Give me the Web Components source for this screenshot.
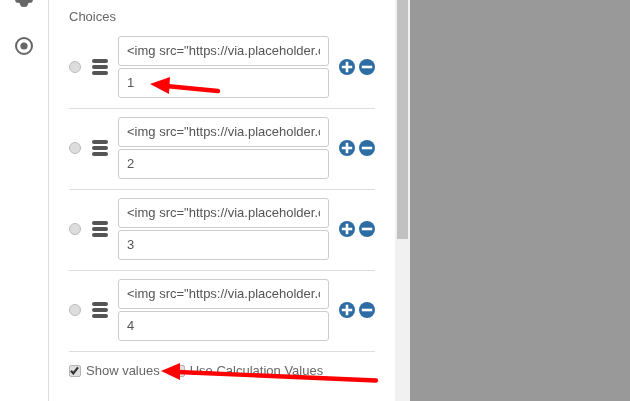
<!DOCTYPE html>
<html>
<head>
<meta charset="utf-8">
<style>
html,body{margin:0;height:401px;overflow:hidden;background:#fff}
body{font:13px "Liberation Sans",Arial,sans-serif;color:#666}
</style>
</head>
<body>
<editor-shell>
<choice-row><span slot="html">&lt;img src="https://via.placeholder.com/150"&gt;</span><span slot="val">1</span></choice-row>
<choice-row><span slot="html">&lt;img src="https://via.placeholder.com/150"&gt;</span><span slot="val">2</span></choice-row>
<choice-row><span slot="html">&lt;img src="https://via.placeholder.com/150"&gt;</span><span slot="val">3</span></choice-row>
<choice-row><span slot="html">&lt;img src="https://via.placeholder.com/150"&gt;</span><span slot="val">4</span></choice-row>
</editor-shell>
<script>
// left rail with the two tool icons
customElements.define("side-rail",class extends HTMLElement{
constructor(){
super();
this.attachShadow({mode:"open"}).innerHTML=`
<style>
:host{display:flex;flex-direction:column;align-items:center;flex:none;box-sizing:border-box;width:49px;border-right:1px solid #ddd;overflow:hidden;gap:30px}
svg{display:block;flex:none}
.gear{margin-top:-12px}
</style>
<svg class="gear" width="18" height="19" viewBox="0 0 18 19"><path fill="#666" d="M0 12L1 14.5L4.5 15L6 18.5L9 19L12 18.5L13.5 15L17 14.5L18 12L18 7L17 4.5L13.5 4L12 .5L9 0L6 .5L4.5 4L1 4.5L0 7Z"/></svg>
<svg width="18" height="18" viewBox="0 0 18 18"><circle cx="9" cy="9" r="8" fill="none" stroke="#666" stroke-width="2"/><circle cx="9" cy="9" r="3.6" fill="#666"/></svg>`;
}
});

// one choice: radio, drag handle, two fields, add and remove
customElements.define("choice-row",class extends HTMLElement{
constructor(){
super();
this.attachShadow({mode:"open"}).innerHTML=`
<style>
:host{display:flex;align-items:center;padding:8px 0 10px;border-bottom:1px solid #ddd}
.radio{box-sizing:border-box;width:12px;height:12px;border-radius:50%;background:#ddd;border:1px solid #bbb;flex:none;margin-top:-1px}
.handle{display:flex;flex-direction:column;gap:2px;width:16px;margin:-1px 10px 0 11px;flex:none}
.handle i{display:block;height:4px;border-radius:2px;background:#555}
.fields{display:flex;flex-direction:column;gap:2px;width:211px;flex:none}
.field{box-sizing:border-box;height:30px;line-height:28px;padding:0 8px;border:1px solid #ccc;border-radius:3px;color:#555;white-space:nowrap;overflow:hidden}
.field div{overflow:hidden;height:28px;margin-top:-.5px}
.btns{display:flex;gap:4px;margin-left:10px;flex:none}
svg{display:block}
</style>
<span class="radio"></span>
<span class="handle"><i></i><i></i><i></i></span>
<div class="fields">
<div class="field"><div><slot name="html"></slot></div></div>
<div class="field"><div><slot name="val"></slot></div></div>
</div>
<div class="btns">
<svg width="16" height="16" viewBox="0 0 16 16"><circle cx="8" cy="8" r="8" fill="#2e6da4"/><path d="M8 2.8v10.4M2.8 8h10.4" stroke="#fff" stroke-width="2.6"/></svg>
<svg width="16" height="16" viewBox="0 0 16 16"><circle cx="8" cy="8" r="8" fill="#2e6da4"/><path d="M2.8 8h10.4" stroke="#fff" stroke-width="2.6"/></svg>
</div>`;
}
});

customElements.define("check-label",class extends HTMLElement{
constructor(){
super();
this.attachShadow({mode:"open"}).innerHTML=`
<style>
:host{display:inline-flex;align-items:center;gap:5px;color:#666}
.box{box-sizing:border-box;width:12px;height:12px;border:1.5px solid #b5b5b5;border-radius:2px;background:#e0e0e0;flex:none;display:block;margin-top:2px}
.box svg{display:none;width:9px;height:9px}
:host([checked]) .box svg{display:block}
</style>
<span class="box"><svg viewBox="0 0 9 9"><path d="M1 4.8l2.3 2.6L8 1.4" fill="none" stroke="#333" stroke-width="2.2"/></svg></span>
<slot></slot>`;
}
});

// whole screen: rail, form panel, scrollbar, grey pane, and the red annotation arrows on top
customElements.define("editor-shell",class extends HTMLElement{
constructor(){
super();
this.attachShadow({mode:"open"}).innerHTML=`
<style>
:host{display:flex;position:relative;height:401px;overflow:hidden}
.panel{box-sizing:border-box;width:346px;flex:none;padding:9px 20px 0;will-change:transform}
.label{line-height:15px;height:19px;color:#666}
.opts{display:flex;align-items:center;gap:5px;margin-top:9px;height:18px}
.bar{width:15px;flex:none;background:#f1f1f1;box-sizing:border-box;padding:0 2px 0 2px}
.thumb{height:239px;background:#c1c1c1}
.grey{flex:1;background:#999}
.marks{position:absolute;left:0;top:0;pointer-events:none}
</style>
<side-rail></side-rail>
<div class="panel">
<div class="label">Choices</div>
<slot></slot>
<div class="opts"><check-label checked>Show values</check-label><check-label style="margin-left:8px">Use Calculation Values</check-label></div>
</div>
<div class="bar"><div class="thumb"></div></div>
<div class="grey"></div>
<svg class="marks" width="630" height="401" fill="#f00" stroke="none">
<path d="M166 86L218 91" stroke="#f00" stroke-width="4.4" stroke-linecap="round"/><path d="M150 84L170 77L169 94Z"/>
<path d="M178 372L376 380.5" stroke="#f00" stroke-width="4.4" stroke-linecap="round"/><path d="M161 371L180 363L180 380Z"/>
</svg>`;
}
});
</script>
</body>
</html>
